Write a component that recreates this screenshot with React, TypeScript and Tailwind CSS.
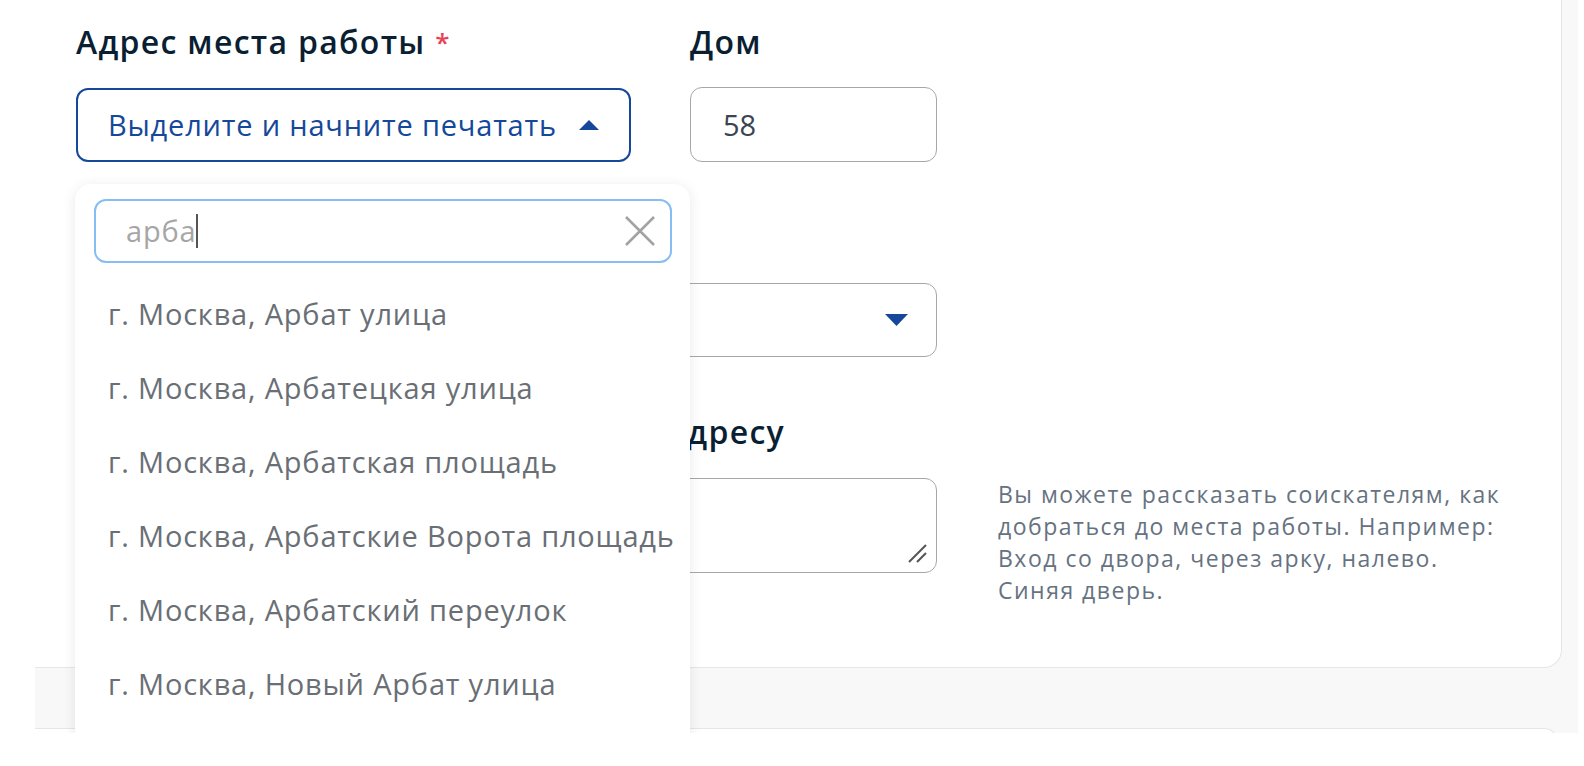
import React from "react";

const font = { fontFamily: '"Open Sans", "Noto Sans", sans-serif' };

const items = [
  "г. Москва, Арбат улица",
  "г. Москва, Арбатецкая улица",
  "г. Москва, Арбатская площадь",
  "г. Москва, Арбатские Ворота площадь",
  "г. Москва, Арбатский переулок",
  "г. Москва, Новый Арбат улица",
];

const Label = ({ children }: { children: React.ReactNode }) => (
  <div className="h-[36px] leading-[36px] text-[32px] font-semibold text-[#0b1f33] whitespace-nowrap tracking-[1.3px]">
    {children}
  </div>
);

const AddressDropdown = () => (
  <div className="absolute left-[-1px] top-[160px] w-[615px] h-[600px] bg-white rounded-[16px] shadow-[0_2px_14px_rgba(0,0,0,0.09)] pl-[19px] pr-[18px] pt-[15px] z-10">
    {/* search */}
    <div className="h-[64px] rounded-[12px] border-2 border-[#86bdf2] flex items-center pl-[30px] pr-[14px]">
      <span className="text-[29px] text-[#a6a6a6] tracking-[0.8px]">арба</span>
      <span className="w-[2px] h-[34px] bg-[#555]" />
      <div className="flex-1" />
      <svg width="32" height="32" viewBox="0 0 32 32">
        <path d="M2 2 L30 30 M30 2 L2 30" stroke="#a3a3a3" strokeWidth="2.6" />
      </svg>
    </div>
    {/* options */}
    <div className="mt-[14px] flex flex-col">
      {items.map((t) => (
        <div
          key={t}
          className="h-[74px] flex items-center pl-[14px] text-[29px] text-[#6a6f76] whitespace-nowrap tracking-[0.8px]"
        >
          {t}
        </div>
      ))}
    </div>
  </div>
);

export default function App() {
  return (
    <div className="w-[1584px] h-[766px] bg-white overflow-hidden" style={font}>
      <div className="h-[733px] overflow-hidden">
        <div className="ml-[35px] w-[1543px] h-[733px] bg-[#f8f8f8]">
          {/* form card */}
          <div className="relative w-[1527px] h-[668px] bg-white border-r border-b border-[#e6e6e6] rounded-br-[18px] pl-[41px] pt-[24px]">
            {/* row 1 */}
            <div className="flex gap-[59px]">
              <div className="relative w-[555px]">
                <Label>
                  Адрес места работы <span className="text-[#ee3f58] align-top text-[26px]">*</span>
                </Label>
                <div className="mt-[28px] h-[74px] rounded-[12px] border-2 border-[#15489a] flex items-center pl-[30px] pr-[30px]">
                  <span className="text-[29px] text-[#15489a] whitespace-nowrap tracking-[0.8px]">
                    Выделите и начните печатать
                  </span>
                  <div className="flex-1" />
                  <svg width="20" height="10" viewBox="0 0 20 10">
                    <path d="M10 0 L20 10 L0 10 Z" fill="#15489a" />
                  </svg>
                </div>
                <AddressDropdown />
              </div>
              <div className="w-[247px]">
                <Label>Дом</Label>
                <div className="mt-[27px] h-[75px] rounded-[12px] border-[1.5px] border-[#a4a7ab] flex items-center pl-[32px]">
                  <span className="text-[29px] text-[#3a4452]">58</span>
                </div>
              </div>
            </div>

            {/* row 2 */}
            <div className="mt-[57px] w-[861px]">
              <Label>Тип помещения</Label>
              <div className="mt-[28px] h-[74px] rounded-[12px] border-[1.5px] border-[#a4a7ab] flex items-center justify-end pr-[28px]">
                <svg width="23" height="12" viewBox="0 0 23 12">
                  <path d="M0 0 L23 0 L11.5 12 Z" fill="#15489a" />
                </svg>
              </div>
            </div>

            {/* row 3 */}
            <div className="mt-[57px]">
              <div className="pl-[2px]">
                <Label>Дополнительная информация по адресу</Label>
              </div>
              <div className="mt-[28px] flex gap-[61px]">
                <div className="relative w-[861px] h-[95px] rounded-[12px] border-[1.5px] border-[#a4a7ab]">
                  <svg className="absolute right-[8px] bottom-[8px]" width="22" height="22" viewBox="0 0 22 22">
                    <path d="M3 20 L20 3 M11 20 L20 11" stroke="#555" strokeWidth="2" />
                  </svg>
                </div>
                <div className="text-[23px] leading-[32px] text-[#66727f] whitespace-nowrap tracking-[1.5px]">
                  Вы можете рассказать соискателям, как
                  <br />
                  добраться до места работы. Например:
                  <br />
                  Вход со двора, через арку, налево.
                  <br />
                  Синяя дверь.
                </div>
              </div>
            </div>
          </div>
          {/* next card top */}
          <div className="mt-[60px] w-[1523px] h-[20px] bg-white border-t border-r border-[#e6e6e6] rounded-tr-[14px]" />
        </div>
      </div>
    </div>
  );
}
